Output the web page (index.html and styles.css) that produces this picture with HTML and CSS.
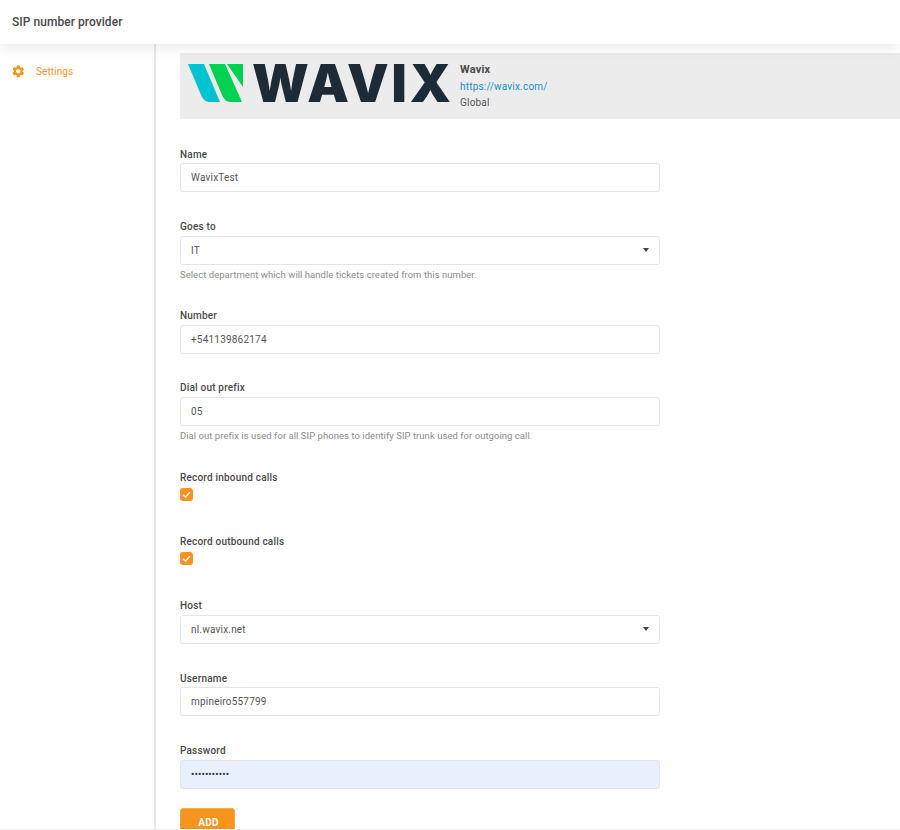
FILE: index.html
```html
<!DOCTYPE html>
<html lang="en">
<head>
<meta charset="utf-8">
<title>SIP number provider</title>
<link rel="stylesheet" href="styles.css">
</head>
<body>
<header class="topbar"><h1 class="title">SIP number provider</h1></header>
<div class="layout">
  <nav class="sidebar">
    <a class="nav-item" href="#">
      <svg class="nav-icon" viewBox="0 0 24 24" aria-hidden="true"><path d="M19.14 12.94c.04-.3.06-.61.06-.94 0-.32-.02-.64-.07-.94l2.03-1.58a.49.49 0 0 0 .12-.61l-1.92-3.32a.488.488 0 0 0-.59-.22l-2.39.96c-.5-.38-1.03-.7-1.62-.94l-.36-2.54a.484.484 0 0 0-.48-.41h-3.84c-.24 0-.43.17-.47.41l-.36 2.54c-.59.24-1.13.57-1.62.94l-2.39-.96c-.22-.08-.47 0-.59.22L2.74 8.87c-.12.21-.08.47.12.61l2.03 1.58c-.05.3-.09.63-.09.94s.02.64.07.94l-2.03 1.58a.49.49 0 0 0-.12.61l1.92 3.32c.12.22.37.29.59.22l2.39-.96c.5.38 1.03.7 1.62.94l.36 2.54c.05.24.24.41.48.41h3.84c.24 0 .44-.17.47-.41l.36-2.54c.59-.24 1.13-.56 1.62-.94l2.39.96c.22.08.47 0 .59-.22l1.92-3.32c.12-.22.07-.47-.12-.61l-2.01-1.58zM12 15.6c-1.98 0-3.6-1.62-3.6-3.6s1.62-3.6 3.6-3.6 3.6 1.62 3.6 3.6-1.62 3.6-3.6 3.6z"/></svg>
      <span>Settings</span>
    </a>
  </nav>
  <main class="content">
    <section class="banner">
      <div class="logo">
        <svg class="logo-mark" viewBox="0 0 55 38" aria-hidden="true">
          <path class="mark-teal" d="M0 0H16L32 38H21Q16 38 13 31Z"/>
          <path class="mark-green" d="M21 0H37L54 38H42Q37 38 34 31Z"/>
          <path class="mark-green" d="M39 0H55V23Z"/>
        </svg>
        <span class="logo-word">WAVIX</span>
      </div>
      <div class="provider">
        <strong class="provider-name">Wavix</strong>
        <a class="provider-link" href="#">https://wavix.com/</a>
        <span class="provider-scope">Global</span>
      </div>
    </section>
    <form class="form">
      <div class="field">
        <label class="label">Name</label>
        <input class="control" type="text" value="WavixTest">
      </div>
      <div class="field">
        <label class="label">Goes to</label>
        <div class="control select">IT</div>
        <p class="help">Select department which will handle tickets created from this number.</p>
      </div>
      <div class="field">
        <label class="label">Number</label>
        <input class="control" type="text" value="+541139862174">
      </div>
      <div class="field">
        <label class="label">Dial out prefix</label>
        <input class="control" type="text" value="05">
        <p class="help">Dial out prefix is used for all SIP phones to identify SIP trunk used for outgoing call.</p>
      </div>
      <div class="field field-check">
        <label class="label">Record inbound calls</label>
        <span class="check"><svg viewBox="0 0 13 13" aria-hidden="true"><path d="M3 6.8L5.4 9.1L10 4.2"/></svg></span>
      </div>
      <div class="field field-check">
        <label class="label">Record outbound calls</label>
        <span class="check"><svg viewBox="0 0 13 13" aria-hidden="true"><path d="M3 6.8L5.4 9.1L10 4.2"/></svg></span>
      </div>
      <div class="field">
        <label class="label">Host</label>
        <div class="control select">nl.wavix.net</div>
      </div>
      <div class="field">
        <label class="label">Username</label>
        <input class="control" type="text" value="mpineiro557799">
      </div>
      <div class="field field-last">
        <label class="label">Password</label>
        <input class="control control-filled" type="password" value="abcdefghijk">
      </div>
      <button class="submit" type="button">ADD</button>
    </form>
  </main>
</div>
</body>
</html>
```

FILE: styles.css
```css
* { box-sizing: border-box; }
html, body { margin: 0; height: 830px; overflow: hidden; }
body {
  background: #fff;
  font-family: Roboto, "Liberation Sans", sans-serif;
  color: #555;
  display: flex;
  flex-direction: column;
  border-bottom: 1px solid #eee;
}
.topbar {
  height: 44px;
  flex: none;
  display: flex;
  align-items: center;
  padding-left: 12px;
  background: #fff;
  box-shadow: 0 2px 16px rgba(0, 0, 0, .1);
  position: relative;
}
.title { margin: 0; font-size: 12px; font-weight: 500; color: #4a4a4a; letter-spacing: .05px; }
.layout { flex: 1; display: flex; min-height: 0; }
.sidebar {
  width: 156px;
  flex: none;
  border-right: 2px solid #e8e8e8;
  padding: 20px 0 0 11px;
}
.nav-item {
  display: flex;
  align-items: center;
  gap: 10.4px;
  font-size: 10px;
  color: #f7941d;
  text-decoration: none;
  height: 14px;
  letter-spacing: .1px;
}
.nav-icon { width: 14.6px; height: 14.6px; fill: #f7941d; flex: none; }
.content { flex: 1; min-width: 0; padding: 9px 0 0 24px; }
.banner {
  height: 65.5px;
  background: #ececec;
  display: flex;
  align-items: flex-start;
  padding: 11px 0 0 8px;
  gap: 11px;
}
.logo { display: flex; align-items: center; gap: 9px; width: 261px; flex: none; }
.logo-mark { width: 55px; height: 38px; flex: none; }
.mark-teal { fill: #00c5d0; }
.mark-green { fill: #00d153; }
.logo-word {
  font-family: Inter, Roboto, sans-serif;
  font-weight: 900;
  font-size: 52.5px;
  line-height: 38px;
  letter-spacing: 2.8px;
  color: #1c2b36;
}
.provider {
  display: flex;
  flex-direction: column;
  margin-top: -2px;
  font-size: 10px;
  line-height: 16.5px;
  letter-spacing: .2px;
}
.provider-name { font-weight: 700; font-size: 11px; color: #4a4a4a; }
.provider-link { color: #1a8fd1; text-decoration: none; }
.provider-scope { color: #555; }
.form { width: 480px; padding-top: 29.5px; display: flex; flex-direction: column; }
.field { margin-bottom: 27.8px; }
.field-check { margin-bottom: 34.05px; }
.field-last { margin-bottom: 19.2px; padding-top: .7px; }
.label {
  display: block;
  font-size: 10px;
  font-weight: 500;
  line-height: 14px;
  margin-bottom: 1.4px;
  color: #4a4a4a;
  letter-spacing: .2px;
}
.control {
  display: block;
  width: 100%;
  height: 29px;
  border: 1px solid #e4e4e4;
  border-radius: 3px;
  padding: 0 10px;
  background: #fff;
  font-family: Roboto, "Liberation Sans", sans-serif;
  font-size: 10px;
  line-height: 27px;
  letter-spacing: .2px;
  color: #555;
  outline: none;
}
.control-filled { background: #e8f0fe; color: #333; letter-spacing: .1px; }
.select { position: relative; }
.select::after {
  content: "";
  position: absolute;
  right: 10px;
  top: 11px;
  border-left: 3.5px solid transparent;
  border-right: 3.5px solid transparent;
  border-top: 4px solid #444;
}
.help { margin: 3px 0 0; font-size: 9.5px; line-height: 13.88px; color: #8c8c8c; letter-spacing: .04px; }
.check {
  display: block;
  width: 13px;
  height: 13px;
  margin-top: 3.4px;
  border-radius: 3px;
  background: #f7941d;
}
.check svg { display: block; width: 13px; height: 13px; fill: none; stroke: #fff; stroke-width: 1.4; }
.submit {
  align-self: flex-start;
  width: 55px;
  height: 30px;
  flex: none;
  padding: 0 0 1px 2px;
  border: 1px solid #f2a84c;
  border-radius: 3px;
  background: #f7941d;
  color: #fff;
  font-family: Roboto, "Liberation Sans", sans-serif;
  font-size: 10px;
  font-weight: 700;
  letter-spacing: .2px;
}
```
